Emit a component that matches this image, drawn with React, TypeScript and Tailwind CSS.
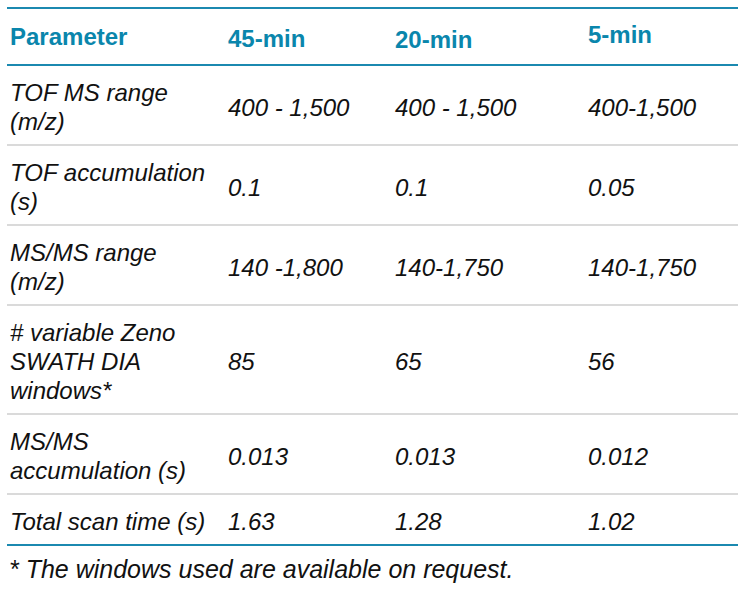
import React from 'react';

const rows: { label: React.ReactNode; values: string[] }[] = [
  { label: <>TOF MS range<br />(m/z)</>, values: ['400 - 1,500', '400 - 1,500', '400-1,500'] },
  { label: <>TOF accumulation<br />(s)</>, values: ['0.1', '0.1', '0.05'] },
  { label: <>MS/MS range<br />(m/z)</>, values: ['140 -1,800', '140-1,750', '140-1,750'] },
  { label: <># variable Zeno<br />SWATH DIA<br />windows*</>, values: ['85', '65', '56'] },
  { label: <>MS/MS<br />accumulation (s)</>, values: ['0.013', '0.013', '0.012'] },
  { label: <>Total scan time (s)</>, values: ['1.63', '1.28', '1.02'] },
];

const cols = 'grid grid-cols-[221px_167px_193px_1fr]';

const App: React.FC = () => {
  return (
    <div className="w-[750px] h-[598px] bg-white pt-[7px] pl-[7px] font-['Liberation_Sans',Arial,sans-serif] text-[24px] leading-[29px] text-[#111]">
      <div className="w-[731px]">
        {/* Header */}
        <div className={`${cols} border-y-2 border-[#1b89b0] pb-[10px] font-bold text-[#0a86ac]`}>
          <div className="pl-[3px] pt-[13px]">Parameter</div>
          <div className="pt-[15px]">45-min</div>
          <div className="pt-[16px]">20-min</div>
          <div className="pt-[11px]">5-min</div>
        </div>

        {/* Rows */}
        {rows.map((row, i) => (
          <div
            key={i}
            className={`${cols} items-center italic pt-[12px] pb-[8px] ${
              i === rows.length - 1 ? 'border-b-2 border-[#1b89b0]' : 'border-b-2 border-[#dadada]'
            }`}
          >
            <div className="pl-[3px]">{row.label}</div>
            {row.values.map((v, j) => (
              <div key={j}>{v}</div>
            ))}
          </div>
        ))}

        <p className="italic pl-[2px] pt-[9px] text-[25px]">* The windows used are available on request.</p>
      </div>
    </div>
  );
};

export default App;
